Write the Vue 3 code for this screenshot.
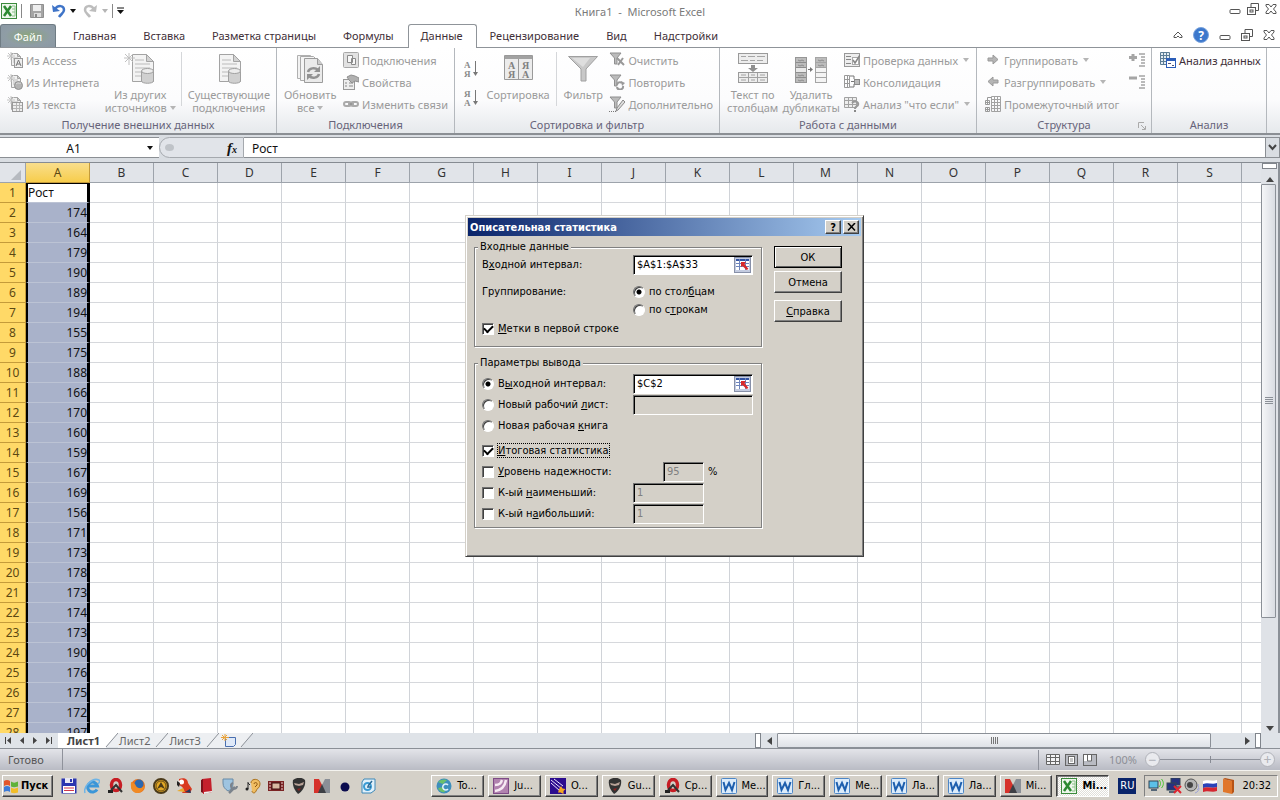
<template>
  <div class="screen">
    <header class="titlebar">
      <div class="quick">
        <button class="plain" aria-label="Excel" v-html="icons.excel"></button>
        <i class="vline"></i>
        <button class="plain save" aria-label="Сохранить" v-html="icons.save"></button>
        <button class="plain" aria-label="Отменить" v-html="icons.undo"></button>
        <i class="caret dark"></i>
        <button class="plain redo" aria-label="Вернуть" v-html="icons.redo"></button>
        <i class="caret"></i>
        <i class="vline"></i>
        <button class="plain" aria-label="Настройка панели" v-html="icons.customize"></button>
      </div>
      <h1>Книга1&nbsp; -&nbsp; Microsoft Excel</h1>
      <div class="win-buttons">
        <button class="plain" aria-label="Свернуть" v-html="icons.min"></button>
        <button class="plain" aria-label="Восстановить" v-html="icons.restore"></button>
        <button class="plain" aria-label="Закрыть" v-html="icons.close"></button>
      </div>
    </header>

    <nav class="tabs">
      <button class="file">Файл</button>
      <button v-for="tab in tabs" :key="tab" class="tab" :class="{ active: tab === activeTab }" @click="activeTab = tab">
        {{ tab }}
      </button>
      <div class="tabs-right">
        <button class="plain" aria-label="Свернуть ленту" v-html="icons.collapse"></button>
        <button class="plain" aria-label="Справка" v-html="icons.help"></button>
        <button class="plain" aria-label="Свернуть окно" v-html="icons.min"></button>
        <button class="plain" aria-label="Восстановить окно" v-html="icons.restore"></button>
        <button class="plain" aria-label="Закрыть окно" v-html="icons.close"></button>
      </div>
    </nav>

    <section class="ribbon">
      <div v-for="group in groups" :key="group.title" class="group" :class="group.name">
        <div class="group-body">
          <template v-for="(part, i) in group.parts" :key="i">
            <i v-if="part === '|'" class="inner-line"></i>
            <div v-else-if="part.stack" class="stack" :class="{ enabled: part.enabled }">
              <button v-for="item in part.stack" :key="item[1]" class="small">
                <span class="ico" v-html="icons[item[0]]"></span>{{ item[1] }}<i v-if="item[2]" class="caret"></i>
              </button>
            </div>
            <div v-else-if="part.only" class="only" :class="part.cls">
              <button v-for="item in part.only" :key="item[0]" class="plain" :aria-label="item[1]" v-html="icons[item[0]]"></button>
            </div>
            <button v-else class="large">
              <span class="big-ico" v-html="icons[part.icon]"></span>
              <span>{{ part.lines[0] }}</span>
              <span v-if="part.lines[1]">{{ part.lines[1] }}<i v-if="part.caret" class="caret"></i></span>
            </button>
          </template>
        </div>
        <div class="group-title">
          {{ group.title }}
          <span v-if="group.launcher" class="launcher" v-html="icons.launcher"></span>
        </div>
      </div>
    </section>

    <section class="formula-bar">
      <div class="name-box">
        <input v-model="cellName" aria-label="Имя ячейки" />
        <i class="caret dark"></i>
      </div>
      <div class="fx">
        <i class="knob"></i>
        <button class="plain fx-button">f<sub>x</sub></button>
      </div>
      <input v-model="formula" class="formula" aria-label="Строка формул" />
      <button class="plain expand" aria-label="Развернуть" v-html="icons.chevron"></button>
    </section>

    <main class="sheet">
      <div class="cells">
        <table>
          <thead>
            <tr>
              <th class="corner"><i></i></th>
              <th v-for="col in columns" :key="col" :class="{ gold: col === 'A' }">{{ col }}</th>
            </tr>
          </thead>
          <tbody>
            <tr v-for="(value, r) in values" :key="r">
              <th class="gold">{{ r + 1 }}</th>
              <td v-for="col in columns" :key="col" :class="{ picked: col === 'A', first: r === 0 && col === 'A' }">
                {{ col === 'A' ? value : '' }}
              </td>
            </tr>
          </tbody>
        </table>
      </div>
      <div class="vscroll">
        <i class="split"></i>
        <button class="plain" aria-label="Вверх"><i class="tri up"></i></button>
        <div class="vthumb"><i></i></div>
        <div class="vrest"></div>
        <button class="plain" aria-label="Вниз"><i class="tri down"></i></button>
      </div>
    </main>

    <section class="sheet-tabs">
      <div class="sheet-left">
        <div class="sheet-nav" v-html="icons.sheetNav"></div>
        <template v-for="(name, i) in sheets" :key="name">
          <button class="sheet-tab" :class="{ current: i === 0 }">{{ name }}</button>
          <span class="slant" v-html="i === 0 ? icons.slantFirst : icons.slant"></span>
        </template>
        <button class="plain new-sheet" aria-label="Новый лист" v-html="icons.newSheet"></button>
        <span class="slant" v-html="icons.slantLast"></span>
      </div>
      <div class="hscroll">
        <i class="split"></i>
        <button class="plain" aria-label="Влево"><i class="tri left"></i></button>
        <div class="htrack"><div class="hthumb"><i></i></div></div>
        <button class="plain" aria-label="Вправо"><i class="tri right"></i></button>
        <i class="split"></i>
      </div>
    </section>

    <footer class="status">
      <span class="ready">Готово</span>
      <div class="views" v-html="icons.views"></div>
      <label class="percent" for="zoom">100%</label>
      <div class="zoom">
        <button class="plain round" aria-label="Уменьшить">−</button>
        <input id="zoom" v-model="zoom" type="range" min="0" max="200" />
        <button class="plain round" aria-label="Увеличить">+</button>
      </div>
    </footer>

    <footer class="taskbar">
      <button class="start"><span v-html="icons.windows"></span>Пуск</button>
      <div class="launch">
        <button v-for="name in launch" :key="name" class="plain" :aria-label="name" v-html="icons[name]"></button>
      </div>
      <div class="tasks">
        <button v-for="(task, i) in tasks" :key="i" class="task" :class="{ pressed: i === tasks.length - 1 }">
          <span v-html="icons[task[0]]"></span>{{ task[1] }}
        </button>
      </div>
      <span class="lang">RU</span>
      <div class="tray">
        <span v-for="name in tray" :key="name" v-html="icons[name]"></span>
        <time>20:32</time>
      </div>
    </footer>

    <form class="dialog" role="dialog" aria-labelledby="dlg-title" @submit.prevent>
      <div class="dlg-title">
        <h2 id="dlg-title">Описательная статистика</h2>
        <button type="button" class="dlg-x">?</button>
        <button type="button" class="dlg-x" aria-label="Закрыть" v-html="icons.dlgClose"></button>
      </div>
      <div class="dlg-body">
        <div class="dlg-main">
          <fieldset class="source">
            <legend>Входные данные</legend>
            <div class="row">
              <label for="src"><span>В<u>х</u>одной интервал:</span></label>
              <span class="ref"><input id="src" v-model="source" /><button type="button" v-html="icons.refPick"></button></span>
            </div>
            <div class="row grouping">
              <span>Группирование:</span>
              <div class="radios">
                <label><input v-model="by" type="radio" value="cols" /><span>по стол<u>б</u>цам</span></label>
                <label><input v-model="by" type="radio" value="rows" /><span>по с<u>т</u>рокам</span></label>
              </div>
            </div>
            <label class="labels"><input v-model="labels" type="checkbox" /><span><u>М</u>етки в первой строке</span></label>
          </fieldset>
          <fieldset class="output">
            <legend>Параметры вывода</legend>
            <div class="row">
              <label><input v-model="out" type="radio" value="range" /><span>В<u>ы</u>ходной интервал:</span></label>
              <span class="ref"><input v-model="target" aria-label="Выходной интервал" /><button type="button" v-html="icons.refPick"></button></span>
            </div>
            <div class="row">
              <label><input v-model="out" type="radio" value="sheet" /><span>Новый рабочий <u>л</u>ист:</span></label>
              <span class="ref off"><input disabled aria-label="Новый рабочий лист" /></span>
            </div>
            <div class="row">
              <label><input v-model="out" type="radio" value="book" /><span>Новая рабочая <u>к</u>нига</span></label>
            </div>
            <div class="row summary">
              <label><input v-model="summary" type="checkbox" /><span class="focused"><u>И</u>тоговая статистика</span></label>
            </div>
            <div class="row">
              <label><input type="checkbox" /><span><u>У</u>ровень надежности:</span></label>
              <span class="ref off level"><input disabled value="95" aria-label="Уровень надежности" /></span>
              <span class="pct">%</span>
            </div>
            <div class="row">
              <label><input type="checkbox" /><span>К-ый <u>н</u>аименьший:</span></label>
              <span class="ref off kth"><input disabled value="1" aria-label="К-ый наименьший" /></span>
            </div>
            <div class="row">
              <label><input type="checkbox" /><span>К-ый н<u>а</u>ибольший:</span></label>
              <span class="ref off kth"><input disabled value="1" aria-label="К-ый наибольший" /></span>
            </div>
          </fieldset>
        </div>
        <div class="dlg-buttons">
          <button type="submit" class="default">ОК</button>
          <button type="button">Отмена</button>
          <button type="button"><u>С</u>правка</button>
        </div>
      </div>
    </form>
  </div>
</template>

<script setup>
import { ref } from 'vue'

const activeTab = ref('Данные')
const cellName = ref('A1')
const formula = ref('Рост')
const zoom = ref(100)
const source = ref('$A$1:$A$33')
const target = ref('$C$2')
const by = ref('cols')
const out = ref('range')
const labels = ref(true)
const summary = ref(true)

const tabs = ['Главная', 'Вставка', 'Разметка страницы', 'Формулы', 'Данные', 'Рецензирование', 'Вид', 'Надстройки']
const columns = 'ABCDEFGHIJKLMNOPQRS'.split('').concat('')
const sheets = ['Лист1', 'Лист2', 'Лист3']
const values = [
  'Рост', 174, 164, 179, 190, 189, 194, 155, 175, 188, 166, 170, 160, 159,
  167, 169, 156, 171, 173, 178, 173, 174, 173, 190, 176, 175, 172, 197
]

const groups = [
  {
    name: 'g-external',
    title: 'Получение внешних данных',
    parts: [
      { stack: [['access', 'Из Access'], ['web', 'Из Интернета'], ['text', 'Из текста']] },
      { icon: 'otherSources', lines: ['Из других', 'источников'], caret: true },
      '|',
      { icon: 'existing', lines: ['Существующие', 'подключения'] }
    ]
  },
  {
    name: 'g-links',
    title: 'Подключения',
    parts: [
      { icon: 'refresh', lines: ['Обновить', 'все'], caret: true },
      { stack: [['connections', 'Подключения'], ['props', 'Свойства'], ['links', 'Изменить связи']] }
    ]
  },
  {
    name: 'g-sort',
    title: 'Сортировка и фильтр',
    parts: [
      { only: [['sortAsc', 'По возрастанию'], ['sortDesc', 'По убыванию']], cls: 'sorts' },
      { icon: 'sort', lines: ['Сортировка'] },
      '|',
      { icon: 'filter', lines: ['Фильтр'] },
      { stack: [['clear', 'Очистить'], ['reapply', 'Повторить'], ['advanced', 'Дополнительно']] }
    ]
  },
  {
    name: 'g-data',
    title: 'Работа с данными',
    parts: [
      { icon: 'toColumns', lines: ['Текст по', 'столбцам'] },
      { icon: 'dedupe', lines: ['Удалить', 'дубликаты'] },
      { stack: [['validate', 'Проверка данных', true], ['consolidate', 'Консолидация'], ['whatIf', 'Анализ "что если"', true]] }
    ]
  },
  {
    name: 'g-outline',
    title: 'Структура',
    launcher: true,
    parts: [
      { stack: [['arrowRight', 'Группировать', true], ['arrowLeft', 'Разгруппировать', true], ['subtotal', 'Промежуточный итог']] },
      { only: [['expandRows', 'Показать детали'], ['collapseRows', 'Скрыть детали']], cls: 'details' }
    ]
  },
  {
    name: 'g-analysis',
    title: 'Анализ',
    parts: [{ enabled: true, stack: [['analysis', 'Анализ данных']] }]
  }
]

const launch = ['floppy', 'ie', 'opera', 'firefox', 'aimp', 'parrot', 'book', 'tools', 'ear', 'film', 'mask', 'mx', 'dot', 'mail']
const tray = ['net', 'netOff', 'sound', 'flag', 'notebook']
const tasks = [
  ['globe', 'To...'], ['ju', 'Ju...'], ['comet', 'O...'], ['mask', 'Gu...'], ['opera', 'Ср...'],
  ['word', 'Ме...'], ['word', 'Гл...'], ['word', 'Ме...'], ['word', 'Ла...'], ['word', 'Ла...'],
  ['mx', 'Mi...'], ['excel', 'Mi...']
]

const svg = (w, h, body) => `<svg width="${w}" height="${h}" viewBox="0 0 ${w} ${h}" fill="none" style="display:block">${body}</svg>`

const spark = '<path d="M4 0v8M0 4h8M1 1l6 6M7 1l-6 6" stroke="#c4c4c4"/>'
const page = '<path d="M4.500 1.500h6l3 3v9h-9z" fill="#f1f1f1" stroke="#a6a6a6"/><path d="M10.500 1.500v3h3z" fill="#ccc" stroke="#a6a6a6"/><path d="M6 6h5M6 8h6M6 10h6" stroke="#bdbdbd"/>'
const bigPage = '<path d="M9.500 1.500h14l7 7v20h-21z" fill="#f3f3f3" stroke="#a3a3a3"/><path d="M23.500 1.500v7h7z" fill="#d2d2d2" stroke="#a3a3a3"/><path d="M12 7h9M12 11h15M12 15h15M12 19h15M12 23h12" stroke="#bbb"/>'
const drum = '<path d="M18.500 18v10c0 3 12 3 12 0V18" fill="#d0d0d0" stroke="#a0a0a0"/><ellipse cx="24.500" cy="18" rx="6" ry="2.500" fill="#ececec" stroke="#a0a0a0"/>'
const funnel = '<path d="M1 1h11l-4 5v6H5.500V6z" fill="#bbb" stroke="#8f8f8f"/>'

// Small A/Я stacks with an arrow, used by both sort buttons
const sortIcon = (top, bottom) =>
  svg(16, 18, `<g fill="#8a8a8a" font-family="Liberation Serif, serif" font-size="9" font-weight="bold"><text x="0" y="8">${top}</text><text x="0" y="17">${bottom}</text></g><path d="M11.500 1v14" stroke="#777"/><path d="M9 12h5l-2.500 4z" fill="#777"/>`)

const rowsMark = '<path d="M10 1h6M12 4h4M12 7h4M12 10h4M10 13h6" stroke="#777"/>'
const monitor = (x, y, c) => `<rect x="${x}" y="${y}" width="9" height="7" fill="${c}" stroke="#345"/><path d="M${x + 2} ${y + 9}h6" stroke="#567" stroke-width="2"/>`

const icons = {
  excel: svg(16, 16, '<rect x=".5" y=".5" width="15" height="15" fill="#eef7ec" stroke="#3b8a3c"/><path d="M11 3h3v10h-3M11 6h3M11 9h3" stroke="#8cc08b"/><path d="M3 3l7 10M10 3L3 13" stroke="#2c8a31" stroke-width="2.500"/>'),
  save: svg(14, 14, '<path d="M.5.5h13v13H.5z" fill="#a5a5a5" stroke="#8f8f8f"/><path d="M3 1h8v6H3z" fill="#eee"/><path d="M4 9h7v4H4z" fill="#ddd"/><path d="M5 10h2v3H5z" fill="#888"/>'),
  undo: svg(14, 14, '<path d="M3 5c3-4 9-4 9 1 0 3-3 4-5 7" stroke="#3f74c8" stroke-width="2.500"/><path d="M0 1l1 7 7-1z" fill="#3f74c8"/>'),
  redo: svg(14, 14, '<path d="M11 5C8 1 2 1 2 6c0 3 3 4 5 7" stroke="#bdbdbd" stroke-width="2.500"/><path d="M14 1l-1 7-7-1z" fill="#bdbdbd"/>'),
  customize: svg(8, 8, '<path d="M0 1h7" stroke="#111"/><path d="M0 3h7L3.500 7z" fill="#111"/>'),
  min: svg(12, 12, '<rect x="1" y="6.500" width="10" height="4" rx="1" stroke="#555"/>'),
  restore: svg(12, 12, '<path d="M4 4V.5h7.500v7H9" stroke="#555"/><rect x=".5" y="4.500" width="8" height="7" stroke="#555"/><rect x="3" y="7" width="3" height="2" stroke="#555"/>'),
  close: svg(12, 12, '<path d="M1 1.500h3L6 4l2-2.500h3V3L8.500 6 11 9v1.500H8L6 8l-2 2.500H1V9l2.500-3L1 3z" stroke="#555"/>'),
  collapse: svg(10, 8, '<path d="M1 5l4-4 4 4v1.500H6.500L5 5 3.500 6.500H1z" stroke="#555"/>'),
  help: svg(16, 16, '<circle cx="8" cy="8" r="7.500" fill="#3d78cc" stroke="#7aa3dc"/><text x="8" y="12.500" text-anchor="middle" fill="#fff" font-family="Noto Sans, sans-serif" font-size="12" font-weight="bold">?</text>'),
  access: svg(16, 16, page + spark + '<rect x="7.500" y="6.500" width="8" height="9" fill="#eee" stroke="#999"/><path d="M9 14l2.500-6 2.500 6M10 12h3" stroke="#777"/>'),
  web: svg(16, 16, page + spark + '<circle cx="11.500" cy="11.500" r="4" fill="#b4b4b4" stroke="#909090"/><path d="M9 10c2-2 3 0 5-1" stroke="#ddd"/>'),
  text: svg(16, 16, page + spark + '<rect x="5.500" y="6.500" width="10" height="9" fill="#eee" stroke="#999"/><path d="M6 9.500h9M6 12.500h9M9.500 7v8M12.500 7v8" stroke="#b5b5b5"/>'),
  otherSources: svg(32, 32, '<g transform="translate(-1 0)">' + bigPage + '<path d="M6 0v12M1 5h11M2 1l8 8M10 1l-8 8" stroke="#c0c0c0"/>' + drum + '</g>'),
  existing: svg(32, 32, '<g transform="translate(-3 0)">' + bigPage + drum + '</g>'),
  refresh: svg(32, 32, '<path d="M3.500 2.500h13l5 5v18h-18z" fill="#f2f2f2" stroke="#b0b0b0"/><path d="M6.500 3.500h13l5 5v19h-18z" fill="#f4f4f4" stroke="#aaa"/><path d="M10.500 5.500h13l5 6v18h-18z" fill="#eaeaea" stroke="#9c9c9c"/><path d="M23.500 5.500v6h5" fill="#ccc" stroke="#9c9c9c"/><path d="M14 19c1-4 7-5 10-2M25 21c-1 4-7 5-10 2" stroke="#929292" stroke-width="2.500"/><path d="M26 13v6h-6zM13 27v-6h6z" fill="#929292"/>'),
  connections: svg(16, 16, '<rect x=".5" y=".5" width="15" height="15" rx="1" fill="#e2e2e2" stroke="#a8a8a8"/><path d="M4.500 3.500h5v7h-5zM8.500 6.500h4v6h-4z" fill="#f8f8f8" stroke="#8a8a8a"/>'),
  props: svg(16, 16, '<rect x=".5" y="5.500" width="11" height="10" fill="#eee" stroke="#999"/><path d="M2 9h2M2 12h2M6 9h4M6 12h4" stroke="#888"/><path d="M4 3l4-2 4 1 4 2v4l-4-1-3 2-3-3z" fill="#b0b0b0" stroke="#8e8e8e"/>'),
  links: svg(16, 16, '<rect x="1" y="6" width="7" height="4" rx="2" stroke="#aaa" stroke-width="2"/><rect x="8" y="6" width="7" height="4" rx="2" stroke="#aaa" stroke-width="2"/><path d="M5 8h6" stroke="#909090" stroke-width="1.500"/>'),
  sortAsc: sortIcon('А', 'Я'),
  sortDesc: sortIcon('Я', 'А'),
  sort: svg(32, 32, '<path d="M2.500 2.500h28v24h-28z" fill="#ececec" stroke="#9a9a9a"/><path d="M3 3h27v3H3z" fill="#a2a2a2"/><path d="M16.500 6v20" stroke="#9a9a9a"/><g fill="#808080" font-family="Liberation Serif, serif" font-size="10" font-weight="bold"><text x="6" y="16">А</text><text x="6" y="25">Я</text><text x="20" y="16">Я</text><text x="20" y="25">А</text></g>'),
  filter: svg(32, 32, '<path d="M1.500 3.500h29L19 16v12h-5V16z" fill="#c8c8c8" stroke="#a0a0a0"/><path d="M5 5h18l-7 9z" fill="#dedede"/>'),
  clear: svg(16, 16, funnel + '<path d="M8 6l7 7M14 6l-5 7" stroke="#999" stroke-width="2"/>'),
  reapply: svg(16, 16, funnel + '<path d="M8 11a3 3 0 0 1 5-2M14 12a3 3 0 0 1-6 1" stroke="#999" stroke-width="2"/><path d="M12 7l4 2-3 3z" fill="#999"/>'),
  advanced: svg(16, 16, funnel + '<path d="M14 4l2 2-7 8-2 1 1-3z" fill="#ddd" stroke="#888"/><path d="M0 15.500h7" stroke="#777" stroke-dasharray="1 1"/>'),
  toColumns: svg(32, 32, '<rect x="1.500" y=".5" width="29" height="10" fill="#ededed" stroke="#9a9a9a"/><path d="M4 3.500h5M11 3.500h7M20 3.500h8M4 7.500h7M13 7.500h5M20 7.500h6" stroke="#a5a5a5"/><path d="M14 12h4v3h3l-5 4-5-4h3z" fill="#8f8f8f"/><rect x="1.500" y="19.500" width="29" height="10" fill="#ededed" stroke="#9a9a9a"/><path d="M1 24.500h30M11.500 20v10M20.500 20v10M4 22h5M14 22h4M23 22h5M4 27h5M14 27h4M23 27h5" stroke="#a2a2a2"/>'),
  dedupe: svg(32, 32, '<rect x=".5" y="4.500" width="11" height="25" fill="#bcbcbc" stroke="#969696"/><path d="M1 9.500h10M1 14.500h10M1 19.500h10M1 24.500h10" stroke="#8d8d8d"/><path d="M1 15h10v4H1z" fill="#e9e9e9"/><path d="M3 7l2 1 2-1 2 1M3 12l2 1 2-1 2 1M3 22l2 1 2-1 2 1M3 27l2 1 2-1 2 1" stroke="#8d8d8d"/><path d="M13 16.500h4" stroke="#777"/><path d="M15 14l3 2.500-3 2.500z" fill="#777"/><rect x="20.500" y="4.500" width="11" height="25" fill="#f4f4f4" stroke="#a5a5a5"/><path d="M21 5h10v9H21z" fill="#bcbcbc"/><path d="M21 9.500h10M21 14.500h10M21 19.500h10M21 24.500h10" stroke="#a5a5a5"/><path d="M23 7l2 1 2-1 2 1M23 12l2 1 2-1 2 1" stroke="#8d8d8d"/>'),
  validate: svg(16, 16, '<rect x=".5" y="1.500" width="15" height="13" fill="#eee" stroke="#999"/><path d="M2 4.500h5M2 7.500h5M2 11.500h5" stroke="#888"/><rect x="8.500" y="5.500" width="6" height="7" fill="#fff" stroke="#aaa"/><path d="M9 8l2 3 5-8" stroke="#888" stroke-width="1.500"/>'),
  consolidate: svg(16, 16, '<path d="M.5 1.500h5v12h-5zM.5 5.500h5M.5 9.500h5M3.500 2v11" stroke="#999"/><path d="M6 2h4v3M6 13h4v-3M7 7.500h4" stroke="#777"/><rect x="10.500" y="5.500" width="5" height="5" fill="#bbb" stroke="#8a8a8a"/>'),
  whatIf: svg(16, 16, '<path d="M.5 1.500h12v10H.5zM.5 4.500h12M.5 8.500h12M4.500 2v10M8.500 2v10" fill="#eee" stroke="#a2a2a2"/><path d="M8 7c3-3 7-1 6 2-1 2-3 1-3 4" stroke="#999" stroke-width="2"/><path d="M10 14h2v2h-2z" fill="#888"/>'),
  arrowRight: svg(16, 16, '<path d="M3 6h5V3l5 4.500L8 12V9H3z" fill="#b5b5b5" stroke="#999"/>'),
  arrowLeft: svg(16, 16, '<path d="M13 6H8V3L3 7.500 8 12V9h5z" fill="#b5b5b5" stroke="#999"/>'),
  subtotal: svg(16, 16, '<path d="M6.500.5h9v15h-9zM6.500 3.500h9M6.500 6.500h9M6.500 9.500h9M6.500 12.500h9M9.500 1v15M12.500 1v15" stroke="#a2a2a2"/><path d="M.5 4.500h4v4h-4zM.5 11.500h4v4h-4zM2.500 4V1.500h4M1 6.500h3M1 13.500h3M2.500 5v3M2.500 12v3" stroke="#999"/>'),
  expandRows: svg(16, 16, rowsMark + '<path d="M4 1v7M0 4.500h8" stroke="#a5a5a5" stroke-width="3"/>'),
  collapseRows: svg(16, 16, rowsMark + '<path d="M0 3h8" stroke="#a5a5a5" stroke-width="3"/>'),
  analysis: svg(16, 16, '<path d="M.5.500h9v12h-9zM.5 3.500h9M.5 6.500h9M.5 9.500h9M3.500 1v12M6.500 1v12" fill="#e4ecf2" stroke="#5c7d95"/><rect x="6.500" y="6.500" width="9" height="9" fill="#fff" stroke="#2b5db8"/><path d="M6 8h10" stroke="#2b5db8" stroke-width="2"/><path d="M8 11.500h3M12 13.500h2" stroke="#557"/>'),
  launcher: svg(8, 8, '<path d="M.5 6V.5H6M3 3l4 4M7.500 4v3.500H4" stroke="#aaa"/>'),
  chevron: svg(9, 7, '<path d="M1 1l3.500 4L8 1" stroke="#444" stroke-width="2"/>'),
  sheetNav: svg(58, 15, '<g fill="#444"><path d="M5 4h1v7H5zM11 4v7L7 7.500zM24 4v7l-4-3.500zM33 4v7l4-3.500zM46 4v7l4-3.500zM51 4h1v7h-1z"/></g>'),
  slantFirst: svg(13, 15, '<path d="M0 0h13L1 14v1H0z" fill="#fff"/><path d="M13 0L1 14h12z" fill="#edeff2"/><path d="M13 0L1 14" stroke="#8b9097"/>'),
  slant: svg(13, 15, '<path d="M0 0h13v15H0z" fill="#edeff2"/><path d="M13 0L1 14" stroke="#8b9097"/>'),
  slantLast: svg(13, 15, '<path d="M0 0h13L0 15z" fill="#edeff2"/><path d="M13 0L1 14" stroke="#8b9097"/>'),
  newSheet: svg(16, 14, '<path d="M4.500 3.500h10v7l-2 2h-8z" fill="#dfe9f8" stroke="#4a6fb0"/><path d="M4 0v7M0 3.500h8M1 1l5 5M6 1L1 6" stroke="#e9a33a"/>'),
  views: svg(52, 14, '<path d="M.5 1.500h13v10H.5zM.5 4.500h13M.5 8.500h13M4.500 2v10M9.500 2v10" fill="#f3f3f5" stroke="#666"/><rect x="19.500" y="1.500" width="12" height="11" fill="#b9bbc2" stroke="#666"/><rect x="22.500" y="3.500" width="6" height="7" fill="#fff" stroke="#666"/><path d="M24 6h3M24 8h3" stroke="#888"/><rect x="37.500" y="1.500" width="13" height="11" fill="#b9bbc2" stroke="#666"/><path d="M38 2h8v6h-8z" fill="#fff"/><path d="M41.500 2v6h4V2" stroke="#666"/>'),
  dlgClose: svg(9, 8, '<path d="M1 0l7 7.500M8 0L1 7.500" stroke="#000" stroke-width="1.500"/>'),
  refPick: svg(15, 14, '<rect width="15" height="14" fill="#c3cbe0"/><path d="M1 1h13v11H1z" fill="#fff"/><path d="M1 2h13" stroke="#3353a3" stroke-width="2"/><path d="M1 5.500h13M1 8.500h13M4.500 1v11M10.500 1v11" stroke="#6e85bd"/><path d="M6 4h5L9.500 6l4 5-2 1-4-4L6 9z" fill="#d8292b"/>'),
  windows: svg(16, 16, '<path d="M1 3c2-1.500 4-1.500 6 0v5C5 6.500 3 7 1 8z" fill="#e2572b"/><path d="M8 3.500c2 1.500 4 1.500 7 0v5c-3 1-5 1-7 0z" fill="#5fb23a"/><path d="M1 9c2-1.500 4-1.500 6 0v5c-2-1.500-4-1-6 0z" fill="#3c7bd8"/><path d="M8 9.500c2 1.500 4 1.500 7 0v5c-3 1-5 1-7 0z" fill="#f2bd27"/>'),
  floppy: svg(16, 16, '<path d="M.5.5h15v15H.5z" fill="#2a35b0"/><path d="M4 0h8v5H4z" fill="#e8e8f4"/><path d="M9 1h2v3H9z" fill="#2a35b0"/><path d="M2 8h12v7H2z" fill="#fff"/><path d="M3 10h10M3 12.500h10" stroke="#d2384a"/>'),
  ie: svg(16, 16, '<path d="M13 11.500A5 5 0 1 1 13.500 8H5" stroke="#3b96d8" stroke-width="3"/><path d="M1 15C-1 9 8-1 15 2c1 1 0 3-1 4" stroke="#6fb4e6" stroke-width="1.500"/>'),
  opera: svg(16, 16, '<ellipse cx="9" cy="7" rx="4.500" ry="5.500" stroke="#c71d24" stroke-width="3.500"/><path d="M1 12h5v3H1z" fill="#222"/><path d="M4 12l5-5 6 7" stroke="#333" stroke-width="2"/>'),
  firefox: svg(16, 16, '<circle cx="8" cy="8" r="7" fill="#e8741e"/><circle cx="9" cy="6" r="4.500" fill="#2b68b0"/><path d="M1 4c2 1 4 1 5 4 2 3 6 3 9-1-1 6-5 8-8 8-4 0-7-4-6-11z" fill="#f08a24"/>'),
  aimp: svg(16, 16, '<circle cx="8" cy="8" r="7" fill="#e3a824" stroke="#4b3a19" stroke-width="2"/><circle cx="8" cy="8" r="5" stroke="#6a4e18"/><path d="M8 4l4 7-4-2-4 2z" fill="#4b3a19"/>'),
  parrot: svg(16, 16, '<path d="M3 1c5-2 9 0 9 4l4 6-2 4H6c3-4 1-6-3-8z" fill="#d93a20"/><circle cx="5.500" cy="4" r="2.500" fill="#fff"/><path d="M1 3l3 2-1 4-2-2z" fill="#222"/><path d="M1 13l6-3 2 4z" fill="#e9aa2d"/><path d="M9 14l5-3 1 4z" fill="#27375c"/>'),
  book: svg(16, 16, '<path d="M3 1l9-1 1 14-9 2z" fill="#c4202c"/><path d="M2 2l2-1v14l-2-1z" fill="#7c1019"/><path d="M5 14l8-1v1l-8 2z" fill="#eee"/>'),
  tools: svg(16, 16, '<path d="M1 1h10v5c0 4-3 6-5 7-3-2-5-4-5-8z" fill="#9ec4e0" stroke="#688aa6"/><path d="M7 15l6-6" stroke="#7b838c" stroke-width="2.500"/><path d="M11 5a3 3 0 1 0 4 3" stroke="#7b838c" stroke-width="2"/>'),
  ear: svg(16, 16, '<path d="M6 5c0-5 9-5 9 1 0 4-3 4-4 7-1 3-4 2-4 0" fill="#f0bd62" stroke="#a8701d"/><path d="M9 6c0-2 4-2 3 1l-2 2" stroke="#8c5510"/><path d="M3 4v7M3 5l2 2" stroke="#222"/><circle cx="2" cy="11" r="1.500" fill="#222"/>'),
  film: svg(16, 16, '<rect y="3" width="16" height="10" fill="#7b2323"/><rect x="4" y="5" width="8" height="6" fill="#d9b9a1" stroke="#3e1111"/><path d="M1 5h2M1 8h2M1 11h2M13 5h2M13 8h2M13 11h2" stroke="#e8cccc"/>'),
  mask: svg(16, 16, '<path d="M2 2c4-3 9-3 12 0 1 5-2 11-7 14C4 13 1 8 2 2z" fill="#333"/><path d="M3 5l5 1 5-2-1 3-4 1-4-1z" fill="#b9a398"/><path d="M6 11l4-1-2 3z" fill="#8d2323"/>'),
  mx: svg(16, 16, '<path d="M0 1h5l3 6-3 8H0z" fill="#d6322b"/><path d="M16 1h-5L8 7l3 8h5z" fill="#8a8f97"/><path d="M8 6l4 9H4z" fill="#3d3f45"/>'),
  dot: svg(16, 16, '<circle cx="8" cy="9" r="4.500" fill="#0b0b4e"/>'),
  mail: svg(16, 16, '<path d="M4 1h11v11l-4 3H2V4z" fill="#e1f0fa" stroke="#3d88b8"/><circle cx="7.500" cy="8.500" r="3.500" stroke="#3b9bd3" stroke-width="2"/><path d="M7 9h4M8 8l4-5" stroke="#2a6a97" stroke-width="1.500"/>'),
  globe: svg(16, 16, '<circle cx="8" cy="8" r="7.500" fill="#3d8fbd"/><path d="M2 4c3-3 7-3 9-2L7 6zM2 10l5-1 2 5c-3 1-6-1-7-4z" fill="#6ac06b"/><path d="M12 7a3 3 0 1 0 0 4" stroke="#e2f2fa" stroke-width="1.500"/>'),
  ju: svg(16, 16, '<rect x=".5" y=".5" width="15" height="15" fill="#b082ae" stroke="#7e4b86"/><path d="M2 7c5 0 6-2 7-5M2 13c7-1 10-5 11-11" stroke="#f7ebf3" stroke-width="2.500"/>'),
  comet: svg(16, 16, '<path d="M0 0h16v16H0z" fill="#2c0c8e"/><path d="M1 2l11 9M1 5l9 8M4 1l9 7" stroke="#e9e3ff"/><path d="M11 8l1.500 2.500 3 .5-2 2 0 3-3-1.500-2.500 0 1-3z" fill="#f6a821"/>'),
  word: svg(16, 16, '<rect x=".5" y=".5" width="15" height="15" rx="1" fill="#dcecfb" stroke="#4d86c6"/><path d="M2.500 4l2 8L8 5l3 7 2.500-8" stroke="#1d5fae" stroke-width="2"/>'),
  net: svg(16, 16, monitor(1, 3, '#5bc0e8') + '<path d="M11 2c2 2 2 5 0 7M13.500 1c2.500 3 2.500 6 0 9" stroke="#45c22f"/>'),
  netOff: svg(16, 16, monitor(5, 0, '#26327f') + monitor(1, 5, '#26327f') + '<path d="M8 8l7 7M15 8l-7 7" stroke="#e02630" stroke-width="2"/>'),
  sound: svg(16, 16, '<circle cx="7" cy="7" r="6" fill="#b5b5b5" stroke="#555"/><circle cx="6" cy="7" r="3" fill="#444"/><path d="M13 12c2-1 2-4 1-6M11 15c3-1 4-3 4-5" stroke="#a0a6d8"/>'),
  flag: svg(16, 16, '<path d="M1 3c5-2 9 1 14-1v4c-5 2-9-1-14 1z" fill="#fff"/><path d="M1 6c5-2 9 1 14-1v4c-5 2-9-1-14 1z" fill="#2841b8"/><path d="M1 10c5-2 9 1 14-1v4c-5 2-9-1-14 1z" fill="#d42630"/>'),
  notebook: svg(16, 16, '<path d="M3 1l9 2v13l-9-2z" fill="#e0762a"/><path d="M3 1l2-1 9 2v12l-2 2V3z" fill="#b65315"/>')
}
</script>

<style>
html,
body,
#app {
  height: 100%;
  margin: 0;
}
</style>

<style scoped>
.screen {
  position: relative;
  display: flex;
  flex-direction: column;
  height: 100vh;
  overflow: hidden;
  background: #fff;
  color: #3f3038;
  font-family: 'Noto Sans', 'Open Sans', sans-serif;
  font-size: 11px;
}

.screen * {
  box-sizing: border-box;
}

button,
input {
  font: inherit;
  color: inherit;
}

button {
  padding: 0;
  border: none;
  background: none;
  white-space: nowrap;
}

.caret {
  display: inline-block;
  border: 3px solid transparent;
  border-top: 4px solid #b5b5b5;
  border-bottom: none;
}

.caret.dark {
  border-top-color: #111;
}

/* title bar */
.titlebar {
  display: grid;
  grid-template-columns: 1fr auto 1fr;
  align-items: center;
  height: 24px;
  flex: none;
}

.titlebar h1 {
  margin: 0;
  padding-bottom: 2px;
  color: #7a7a7a;
  font-size: 11px;
  font-weight: 400;
}

.quick {
  display: flex;
  align-items: center;
  gap: 4px;
  padding: 0 1px 2px;
}

.vline {
  width: 1px;
  height: 14px;
  background: #888;
}

.save {
  margin: 0 4px;
}

.redo {
  margin: 0 1px 0 3px;
}

.win-buttons {
  display: flex;
  justify-content: flex-end;
  gap: 6px;
  padding: 0 3px 6px 0;
}

/* ribbon tabs */
.tabs {
  display: flex;
  flex: none;
  height: 24px;
  border-bottom: 1px solid #8f9499;
}

.file {
  width: 56px;
  margin-right: 4px;
  border: 1px solid #6f7c84;
  border-bottom: none;
  border-radius: 3px 3px 0 0;
  background: radial-gradient(ellipse at center, #8aa57b 0%, #8f9da5 60%, #8b98a4 100%);
  color: #fff;
}

.tab {
  height: 24px;
  padding: 0 13px 2px 12px;
  border: 1px solid transparent;
  border-bottom: none;
}

.tab.active {
  border-color: #8f9499;
  border-radius: 3px 3px 0 0;
  background: #fff;
}

.tabs-right {
  display: flex;
  align-items: center;
  gap: 10px;
  margin-left: auto;
  padding: 0 5px 1px 0;
}

/* ribbon */
.ribbon {
  display: flex;
  flex: none;
  height: 87px;
  border-bottom: 2px solid #8b8f94;
  background: linear-gradient(#fff 0%, #fcfcfd 60%, #e6e9ec 100%);
  color: #9b9b9b;
}

.group {
  display: flex;
  flex-direction: column;
  flex: none;
  border-right: 1px solid #b4b8bd;
}

.g-external {
  width: 277px;
}

.g-links {
  width: 178px;
}

.g-sort {
  width: 265px;
}

.g-data {
  width: 257px;
}

.g-outline {
  width: 175px;
}

.g-analysis {
  width: 115px;
}

.group-body {
  display: flex;
  justify-content: space-between;
  height: 69px;
  padding: 1px 6px 0 7px;
}

.g-analysis .group-body,
.g-outline .group-body {
  padding-left: 8px;
}

.group-title {
  display: flex;
  justify-content: center;
  position: relative;
  color: #67647a;
  line-height: 15px;
}

.launcher {
  position: absolute;
  right: 5px;
  top: 5px;
}

.stack {
  display: flex;
  flex-direction: column;
}

.small {
  display: flex;
  align-items: center;
  gap: 3px;
  height: 22px;
}

.small .caret {
  margin-left: 2px;
}

.enabled {
  color: #3f3038;
}

.large {
  display: flex;
  flex-direction: column;
  align-items: center;
  line-height: 13px;
}

.big-ico {
  padding: 4px 0 3px;
}

.large .caret {
  margin: 0 0 2px 3px;
}

.inner-line {
  width: 1px;
  height: 54px;
  margin-top: 3px;
  background: #d5d7da;
}

.only {
  display: flex;
  flex-direction: column;
}

.sorts {
  gap: 11px;
  padding: 11px 0 0 2px;
}

.details {
  gap: 6px;
  padding-top: 4px;
}

/* formula bar */
.formula-bar {
  display: flex;
  flex: none;
  height: 28px;
  padding: 2px 0 4px;
  border-bottom: 1px solid #868b92;
  background: #d9dde2;
  color: #111;
  font-size: 12px;
}

.name-box {
  display: flex;
  align-items: center;
  width: 159px;
  padding-right: 6px;
  border-top: 1px solid #8b8f94;
  border-bottom: 1px solid #8b8f94;
  background: #fff;
}

.name-box input {
  flex: 1;
  min-width: 0;
  padding: 2px 0 0;
  border: none;
  background: none;
  text-align: center;
}

.fx {
  display: flex;
  align-items: center;
  justify-content: space-between;
  width: 85px;
  padding: 0 6px 0 5px;
  border: 1px solid #a5a9ae;
  border-radius: 11px 0 0 11px;
  background: #e1e4e9;
}

.knob {
  width: 9px;
  height: 7px;
  border-radius: 50%;
  background: #bfc3c8;
}

.fx-button {
  font-family: 'Liberation Serif', serif;
  font-size: 15px;
  font-style: italic;
  font-weight: 700;
  line-height: 16px;
}

.fx-button sub {
  font-size: 10px;
  line-height: 1px;
  vertical-align: baseline;
}

.formula {
  flex: 1;
  min-width: 0;
  padding: 2px 8px 0;
  border: 1px solid #8b8f94;
  border-width: 1px 0;
  background: #fff;
}

.expand {
  display: flex;
  align-items: center;
  justify-content: center;
  width: 15px;
  border: 1px solid #8b8f94;
}

/* sheet */
.sheet {
  display: flex;
  flex: 1;
  min-height: 0;
  font-size: 12px;
}

.cells {
  flex: 1;
  min-width: 0;
  overflow: hidden;
}

table {
  width: 1306px;
  table-layout: fixed;
  border-collapse: separate;
  border-spacing: 0;
}

th,
td {
  height: 20px;
  padding: 1px 0 0;
  border-right: 1px solid #d0d3d8;
  border-bottom: 1px solid #d6d8dc;
  line-height: 18px;
  white-space: nowrap;
}

th {
  width: 64px;
  border-color: #9da3ab;
  background: #e1e4e9;
  color: #333;
  font-weight: 400;
}

.corner {
  width: 26px;
}

.corner i {
  display: block;
  margin: 4px 4px 0 auto;
  width: 0;
  border: 5px solid #b6bac0;
  border-left-color: transparent;
  border-top-color: transparent;
}

.gold {
  border-color: #c49b3a;
  background: #ffd967;
  color: #5c4813;
}

thead .gold {
  background: linear-gradient(#f9de8c, #f7cd4c);
}

.picked {
  border-left: 2px solid #000;
  border-right: 3px solid #000;
  border-bottom-color: #bcc3d4;
  background: #a9b2ca;
  color: #111;
  text-align: right;
}

.picked.first {
  padding-top: 0;
  border-top: 1px solid #000;
  background: #fff;
  text-align: left;
}

.vscroll {
  display: flex;
  flex-direction: column;
  width: 19px;
  border-right: 2px solid #8b9097;
  background: #dfe2e7;
}

.vscroll .split {
  height: 6px;
  margin: 0 1px;
  border: 1px solid #80858c;
  background: #fff;
}

.vscroll button {
  height: 15px;
}

.tri {
  display: inline-block;
  border: 4px solid transparent;
}

.tri.up {
  border-top: none;
  border-bottom: 5px solid #444;
}

.tri.down {
  border-bottom: none;
  border-top: 5px solid #444;
}

.tri.left {
  border-left: none;
  border-right: 5px solid #444;
}

.tri.right {
  border-right: none;
  border-left: 5px solid #444;
}

.vthumb {
  display: flex;
  align-items: center;
  justify-content: center;
  flex: 82;
  margin: 0 2px 0 0;
  border: 1px solid #8b9097;
  border-radius: 1px;
  background: linear-gradient(90deg, #f5f6f8, #d9dce2);
}

.vthumb i {
  width: 8px;
  height: 7px;
  background: repeating-linear-gradient(#8b9097 0 1px, transparent 1px 2px);
}

.vrest {
  flex: 19;
}

/* sheet tabs and horizontal scroll */
.sheet-tabs {
  display: flex;
  flex: none;
  height: 16px;
  border-bottom: 1px solid #8b9097;
  background: #dfe3e8;
  color: #666;
}

.sheet-left {
  display: flex;
  flex: 1;
}

.sheet-tab {
  padding: 0 5px 0 1px;
  background: #edeff2;
  line-height: 15px;
}

.sheet-tab.current {
  padding: 0 5px 0 9px;
  background: #fff;
  color: #444;
  font-weight: 700;
}

.new-sheet {
  padding: 0 3px 0 2px;
  background: #edeff2;
}

.hscroll {
  display: flex;
  flex: 0 0 41%;
  padding-right: 19px;
}

.hscroll .split {
  width: 6px;
  border: 1px solid #80858c;
  background: #fff;
}

.hscroll button {
  width: 16px;
}

.htrack {
  flex: 1;
}

.hthumb {
  display: flex;
  align-items: center;
  justify-content: center;
  width: 94%;
  height: 15px;
  border: 1px solid #8b9097;
  border-radius: 1px;
  background: linear-gradient(#f7f8fa, #dfe2e7);
}

.hthumb i {
  width: 7px;
  height: 7px;
  background: repeating-linear-gradient(90deg, #777 0 1px, transparent 1px 2px);
}

/* status bar */
.status {
  display: flex;
  align-items: center;
  flex: none;
  height: 21px;
  background: linear-gradient(#e3e4e9, #b9bbc4);
  color: #555;
}

.ready {
  width: 63px;
  padding-left: 8px;
  border-right: 1px solid #8f929b;
  line-height: 21px;
}

.views {
  margin-left: auto;
  padding: 3px 11px 3px 7px;
  border-left: 1px solid #8f929b;
}

.percent {
  color: #8d8f96;
}

.zoom {
  display: flex;
  align-items: center;
  padding: 0 5px 0 8px;
}

.round {
  width: 15px;
  height: 15px;
  border: 1px solid #b0b2b9;
  border-radius: 50%;
  background: #e9eaee;
  color: #b0b2b9;
  font-size: 14px;
  line-height: 12px;
}

.zoom input {
  appearance: none;
  width: 100px;
  height: 7px;
  margin: 0;
  background: linear-gradient(#8f929b, #8f929b) center / 100% 1px no-repeat;
}

.zoom input::-webkit-slider-thumb {
  appearance: none;
  width: 1px;
  height: 7px;
  background: #888b94;
}

/* taskbar and dialog share the system font */
.taskbar,
.dialog {
  color: #000;
  font-family: 'DejaVu Sans Condensed', 'DejaVu Sans', sans-serif;
}

.taskbar {
  display: flex;
  align-items: center;
  flex: none;
  height: 30px;
  padding: 0 2px;
  border-top: 1px solid #f4f3ef;
  background: #d4d0c8;
}

.start,
.task {
  display: flex;
  align-items: center;
  height: 22px;
  border: 1px solid;
  border-color: #fff #404040 #404040 #fff;
  box-shadow: inset -1px -1px #808080;
  background: #d4d0c8;
}

.start {
  width: 51px;
  gap: 2px;
  font-weight: 700;
}

.launch {
  display: flex;
  gap: 7px;
  padding-left: 8px;
}

.tasks {
  display: flex;
  gap: 4px;
  flex: 1;
  max-width: 678px;
  margin-left: auto;
}

.task {
  flex: 1;
  min-width: 0;
  gap: 5px;
  padding-left: 4px;
}

.pressed {
  border-color: #404040 #fff #fff #404040;
  box-shadow: inset 1px 1px #808080;
  background: repeating-conic-gradient(#fff 0 25%, #e1dfda 0 50%) 0 0 / 2px 2px;
  font-weight: 700;
}

.lang {
  margin: 0 8px 0 9px;
  padding: 0 2px;
  background: #0a246a;
  color: #fff;
  line-height: 16px;
}

.tray {
  display: flex;
  align-items: center;
  gap: 2px;
  height: 22px;
  padding: 0 6px 0 3px;
  border: 1px solid;
  border-color: #808080 #fff #fff #808080;
}

.tray time {
  padding-left: 4px;
}

/* dialog floats over the sheet */
.dialog {
  position: absolute;
  left: 465px;
  top: 215px;
  width: 399px;
  height: 342px;
  padding: 2px;
  border: 1px solid;
  border-color: #d4d0c8 #404040 #404040 #d4d0c8;
  box-shadow: inset 1px 1px #fff, inset -1px -1px #808080;
  background: #d4d0c8;
}

.dlg-title {
  display: flex;
  align-items: center;
  gap: 2px;
  height: 18px;
  padding: 0 2px;
  background: linear-gradient(90deg, #0a246a, #a6caf0);
}

.dlg-title h2 {
  flex: 1;
  margin: 0;
  color: #fff;
  font-size: 11px;
}

.dlg-x {
  display: flex;
  align-items: center;
  justify-content: center;
  width: 16px;
  height: 14px;
  border: 1px solid;
  border-color: #fff #404040 #404040 #fff;
  box-shadow: inset -1px -1px #808080;
  background: #d4d0c8;
  font-weight: 700;
}

.dlg-body {
  display: flex;
  gap: 12px;
  padding: 4px 6px;
}

.dlg-main {
  width: 288px;
}

fieldset {
  margin: 0;
  padding: 0 8px 0 7px;
  border: 1px solid #808080;
  box-shadow: 1px 1px #fff, inset 1px 1px #fff;
}

.source {
  height: 107px;
  margin-bottom: 9px;
}

.output {
  height: 172px;
  padding-top: 3px;
}

legend {
  margin-left: -4px;
  padding: 0 2px;
  background: #d4d0c8;
  line-height: 14px;
}

.row {
  display: flex;
  align-items: center;
  height: 21px;
}

.row > label,
.row > span:first-child {
  width: 151px;
}

.grouping {
  align-items: flex-start;
  height: 38px;
  margin-top: 8px;
  line-height: 18px;
}

fieldset label {
  display: flex;
  align-items: center;
  gap: 4px;
  white-space: nowrap;
}

.labels {
  line-height: 16px;
}

.summary {
  margin-top: 4px;
}

.focused {
  outline: 1px dotted #000;
}

input[type='radio'],
input[type='checkbox'] {
  appearance: none;
  flex: none;
  width: 12px;
  height: 12px;
  margin: 0;
  border: 1px solid;
  border-color: #707070 #fff #fff #707070;
  background: #fff;
  box-shadow: inset 1px 1px #404040;
}

input[type='radio'] {
  border-radius: 50%;
}

input[type='radio']:checked {
  background: radial-gradient(circle, #000 0 2px, #fff 3px);
}

input[type='checkbox']:checked {
  display: grid;
}

input[type='checkbox']:checked::before {
  content: '';
  place-self: center;
  width: 7px;
  height: 4px;
  margin-bottom: 2px;
  border: solid #000;
  border-width: 0 0 2px 2px;
  transform: rotate(-45deg);
}

.ref {
  display: flex;
  width: 120px;
  height: 20px;
  padding: 1px;
  border: 1px solid;
  border-color: #707070 #fff #fff #707070;
  box-shadow: inset 1px 1px #000;
  background: #fff;
}

.ref input {
  flex: 1;
  min-width: 0;
  padding: 0 2px;
  border: none;
  background: none;
}

.ref button {
  align-self: center;
  border: 1px solid #8790a8;
}

.off {
  background: #d4d0c8;
  color: #808080;
}

.level {
  width: 41px;
  margin-left: 30px;
}

.kth {
  width: 71px;
}

.pct {
  padding-left: 4px;
}

.dlg-buttons {
  display: flex;
  flex-direction: column;
  gap: 3px;
  padding-top: 6px;
}

.dlg-buttons button {
  width: 68px;
  height: 22px;
  border: 1px solid;
  border-color: #fff #404040 #404040 #fff;
  box-shadow: inset -1px -1px #808080;
}

.dlg-buttons .default {
  border-color: #000;
  box-shadow: inset 1px 1px #fff, inset -1px -1px #606060;
}

.dlg-buttons button:last-child {
  margin-top: 4px;
}
</style>
